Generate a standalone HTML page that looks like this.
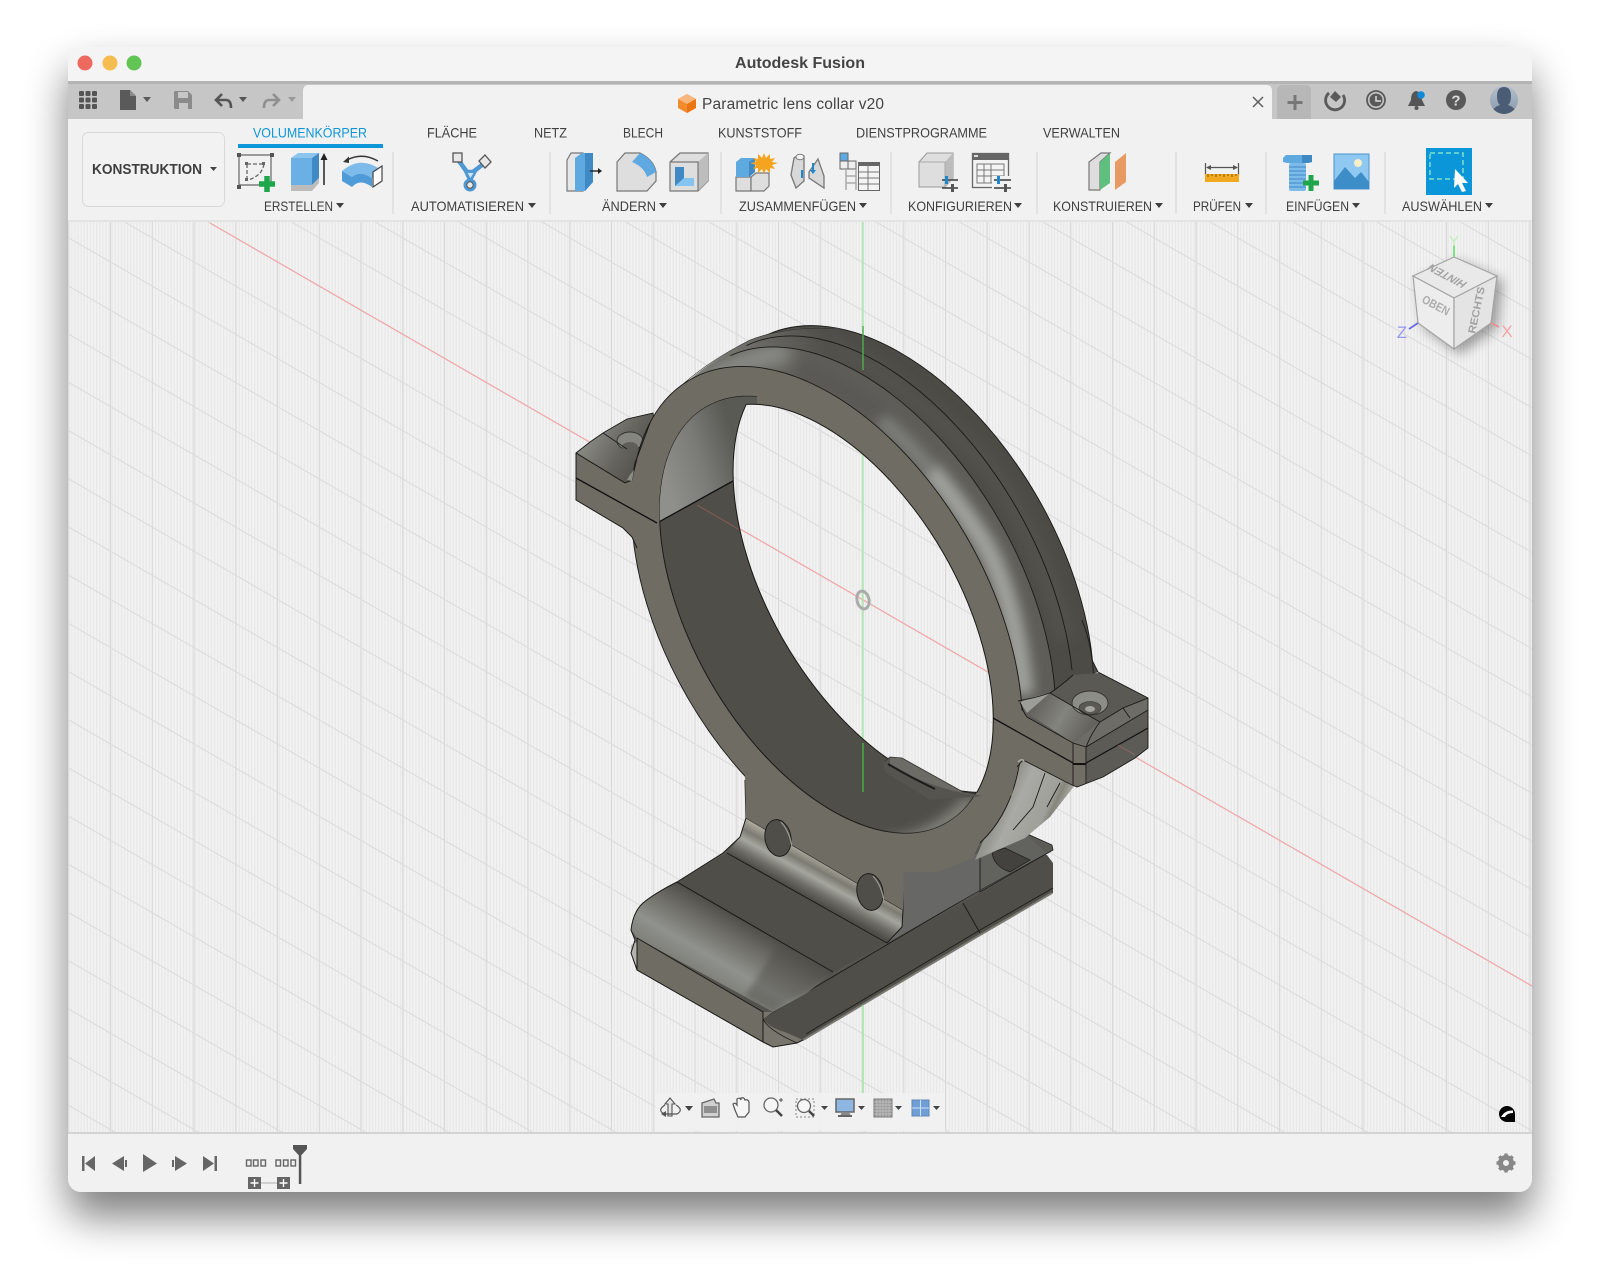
<!DOCTYPE html>
<html lang="de"><head><meta charset="utf-8"><title>Autodesk Fusion</title>
<style>
html,body{margin:0;padding:0;background:#fff;width:1600px;height:1282px;overflow:hidden}
svg{display:block}
text{font-family:"Liberation Sans",sans-serif;fill:#3f3f3f}
</style></head><body>
<svg xmlns="http://www.w3.org/2000/svg" width="1600" height="1282" viewBox="0 0 1600 1282">
<defs>
<filter id="ws" x="-10%" y="-10%" width="120%" height="125%"><feGaussianBlur stdDeviation="21"/></filter>
<filter id="b9" x="-40%" y="-40%" width="180%" height="180%"><feGaussianBlur stdDeviation="9"/></filter>
<filter id="b6" x="-30%" y="-30%" width="160%" height="160%"><feGaussianBlur stdDeviation="6"/></filter>
<filter id="b3" x="-30%" y="-30%" width="160%" height="160%"><feGaussianBlur stdDeviation="3"/></filter>
<clipPath id="win"><rect x="68" y="47" width="1464" height="1145" rx="13"/></clipPath>
<clipPath id="avc"><circle cx="1504" cy="100" r="14"/></clipPath>
<pattern id="pf" width="3.1" height="4" patternUnits="userSpaceOnUse"><rect width="3.1" height="4" fill="#f2f2f2"/><rect width="1.1" height="4" fill="#e7e7e7"/></pattern>
<pattern id="pv" width="41.75" height="40" patternUnits="userSpaceOnUse" patternTransform="translate(110 0)"><rect x="0" width="1.1" height="40" fill="#d8d8d8"/></pattern>
<pattern id="pd" width="83.5" height="48.2" patternUnits="userSpaceOnUse" patternTransform="translate(863 600)"><path d="M-2-1.15L85.5 49.35" stroke="#dadada" stroke-width="1" fill="none"/></pattern>
<linearGradient id="gA" gradientUnits="userSpaceOnUse" x1="727" y1="853" x2="746" y2="818"><stop offset="0" stop-color="#4f4e49"/><stop offset=".22" stop-color="#6d6c66"/><stop offset=".5" stop-color="#a5a69f"/><stop offset=".72" stop-color="#7c7b72"/><stop offset="1" stop-color="#b2b0a2"/></linearGradient>
<linearGradient id="gC" gradientUnits="userSpaceOnUse" x1="677" y1="882" x2="643" y2="941"><stop offset="0" stop-color="#4f4e49"/><stop offset=".3" stop-color="#6d6c66"/><stop offset=".7" stop-color="#90928d"/><stop offset="1" stop-color="#7f807a"/></linearGradient>
<linearGradient id="gT" gradientUnits="userSpaceOnUse" x1="662" y1="475" x2="738" y2="450"><stop offset="0" stop-color="#8f908c"/><stop offset=".5" stop-color="#7b7b77"/><stop offset="1" stop-color="#5a5a55"/></linearGradient>
<linearGradient id="gBL" gradientUnits="userSpaceOnUse" x1="585" y1="440" x2="635" y2="470"><stop offset="0" stop-color="#8a8a85"/><stop offset=".6" stop-color="#66655f"/><stop offset="1" stop-color="#55544f"/></linearGradient>
<linearGradient id="gBR" gradientUnits="userSpaceOnUse" x1="1035" y1="705" x2="1085" y2="735"><stop offset="0" stop-color="#64635d"/><stop offset=".5" stop-color="#84847f"/><stop offset="1" stop-color="#64635d"/></linearGradient>
<linearGradient id="gLB" gradientUnits="userSpaceOnUse" x1="1010" y1="790" x2="1065" y2="815"><stop offset="0" stop-color="#95958f"/><stop offset=".2" stop-color="#a9aaa5"/><stop offset=".68" stop-color="#a0a09a"/><stop offset=".78" stop-color="#85857d"/><stop offset="1" stop-color="#b9b9b4"/></linearGradient>
<linearGradient id="gH" gradientUnits="userSpaceOnUse" x1="670" y1="380" x2="830" y2="340"><stop offset="0" stop-color="#868782"/><stop offset=".55" stop-color="#6b6a65"/><stop offset="1" stop-color="#4f4e49"/></linearGradient>
<linearGradient id="av" x1="0" y1="0" x2="0" y2="1"><stop offset="0" stop-color="#b4c0ce"/><stop offset="1" stop-color="#8a98aa"/></linearGradient>
<clipPath id="cOut"><ellipse cx="897" cy="578" rx="276" ry="162" transform="rotate(60 897 578)"/></clipPath>
<clipPath id="c3"><ellipse cx="860" cy="599" rx="276" ry="160" transform="rotate(60 860 599)"/></clipPath>
<clipPath id="cIn"><ellipse cx="826.5" cy="614.7" rx="240" ry="134" transform="rotate(60 826.5 614.7)"/></clipPath>
<clipPath id="cH"><ellipse cx="829" cy="619" rx="236" ry="132" transform="rotate(60 829 619)"/></clipPath>
<clipPath id="cF"><ellipse cx="827" cy="617" rx="272" ry="159" transform="rotate(60 827 617)"/></clipPath>
<clipPath id="cB"><ellipse cx="900" cy="574" rx="240" ry="134" transform="rotate(60 900 574)"/></clipPath>
<clipPath id="l3"><path d="M727 352L760 300H1200V760L1049 688Z"/></clipPath>
<clipPath id="l2"><path d="M743 342L780 300H1200V740L1072 670Z"/></clipPath>
<mask id="hm" maskUnits="userSpaceOnUse" x="0" y="0" width="1600" height="1282"><rect width="1600" height="1282" fill="#fff"/><g clip-path="url(#cB)"><ellipse cx="829" cy="619" rx="236" ry="132" transform="rotate(60 829 619)" fill="#000"/></g></mask>
</defs>

<rect width="1600" height="1282" fill="#fff"/>
<rect x="68" y="70" width="1464" height="1147" rx="16" fill="#000" opacity=".5" filter="url(#ws)"/>

<g clip-path="url(#win)">
<rect x="68" y="47" width="1464" height="1145" fill="#f1f1f1"/>
<rect x="68" y="47" width="1464" height="34" fill="#f4f4f4"/>
<rect x="68" y="81" width="1464" height="3" fill="#b4b4b4"/>
<rect x="68" y="84" width="1464" height="35" fill="#c6c6c6"/>
<path d="M303 119V90a5 5 0 0 1 5-5H1267a5 5 0 0 1 5 5V119Z" fill="#f2f2f2"/>
<path d="M1277 119V90a5 5 0 0 1 5-5H1306a5 5 0 0 1 5 5V119Z" fill="#b7b7b7"/>
<rect x="68" y="119" width="1464" height="101" fill="#f1f1f1"/>
<rect x="68" y="220" width="1464" height="2" fill="#e3e3e3"/>
<rect x="68" y="222" width="1464" height="910" fill="url(#pf)"/>
<rect x="68" y="222" width="1464" height="910" fill="url(#pv)"/>
<rect x="68" y="222" width="1464" height="910" fill="url(#pd)"/>
<path d="M210 223L1532 986" stroke="#f2a6a6" stroke-width="1.200"/>
<path d="M863 222V1093" stroke="#a6e8a6" stroke-width="1.400"/>
<ellipse cx="863" cy="600" rx="6" ry="9" fill="none" stroke="#a9aca9" stroke-width="3" transform="rotate(-12 863 600)"/>
<rect x="68" y="1132" width="1464" height="2.500" fill="#d3d3d3"/>
<rect x="68" y="1134" width="1464" height="58" fill="#f1f1f1"/>
</g>

<!-- MODEL: foot -->
<path d="M745 780L746 818L740 837L723 853L677 882Q655 893 643 903Q633 912 631 930L635 940L631 953L637 970L763 1042L773 1047L797 1043L803 1040L980 935L1052 893L1053 873L1052 863L1045 853L1053 850L1052 845L1023 832L900 800Z" fill="#55544f"/>
<path d="M1023 832L1052 845L1053 850L980 892L965 870Z" fill="#5c5b56" stroke="#1c1c1a" stroke-width=".8"/>
<path d="M763 1018L883 947L963 903L1047 855L1053 863L1053 893L980 935L803 1040L797 1043L773 1047L763 1042Z" fill="#4f4e48"/>
<path d="M803 1040L980 935L1052 893" stroke="#7a7972" stroke-width="2" fill="none"/>
<path d="M806 1034L980 930L1053 888" stroke="#1c1c1a" stroke-width=".9" fill="none"/>
<path d="M763 1018L883 947L980 890L1047 853" stroke="#1c1c1a" stroke-width="1" fill="none"/>
<path d="M963 903L980 933" stroke="#1c1c1a" stroke-width="1"/>
<path d="M904 872L980 853V890L887 943L902 927L903 910Z" fill="#676765"/>
<path d="M980 853L1023 832L1047 853L980 890Z" fill="#62625e"/>
<path d="M980 853V890" stroke="#1c1c1a" stroke-width=".9"/>
<path d="M992 852Q993 866 1010 872L1030 860L1005 848Z" fill="#43423e" stroke="#1c1c1a" stroke-width=".7"/>
<path d="M746 818L903 910L902 927L887 943L727 853L740 837Z" fill="url(#gA)"/>
<path d="M727 853L887 943L833 972L677 882Z" fill="#4f4e49"/>
<path d="M677 882L833 972L807 993L773 1012L637 938L631 930Q633 912 643 903Q655 893 677 882Z" fill="url(#gC)"/>
<path d="M780 942L833 972L807 993L773 1012L745 996Z" fill="#4f4e49" opacity=".45" filter="url(#b3)"/>
<path d="M637 938L763 1012V1042L637 970L631 953L635 940Z" fill="#6f6c63"/>
<path d="M763 1012L773 1012L763 1019V1042L773 1047L797 1043L803 1040L785 1032Q770 1028 763 1019" fill="#77756c"/>
<path d="M631 945L637 942V968L631 953Z" fill="#b5b5b0"/>
<path d="M763 1019Q768 1030 797 1043" stroke="#1c1c1a" stroke-width=".9" fill="none"/>
<g fill="none" stroke="#191917" stroke-width="1">
<path d="M745 780L746 818L740 837L723 853L677 882Q655 893 643 903Q633 912 631 930L635 940L631 953L637 970L763 1042L773 1047L797 1043L803 1040"/>
<path d="M727 853L887 943"/><path d="M677 882L833 972"/><path d="M637 938L763 1012V1042"/><path d="M637 938V970"/>
<path d="M746 818L903 910"/>
<path d="M903 872V910L902 927L887 943"/>
</g>

<!-- MODEL: ring -->
<g mask="url(#hm)">
<path d="M576 453L590 442L603 433L627 419L653 413L655 430L640 470L632 480L625 483Z" fill="url(#gBL)" stroke="#191917" stroke-width=".9"/>
<ellipse cx="630" cy="441" rx="13" ry="9" fill="#85857f" stroke="#33322e" stroke-width=".9"/>
<ellipse cx="630" cy="447" rx="8" ry="5" fill="#5f5e59"/>
<path d="M603 433L627 449" stroke="#191917" stroke-width=".8"/>
<path d="M1082 620Q1090 640 1092 660L1098 672L1060 690Z" fill="#4c4b46"/>
<ellipse cx="897" cy="578" rx="276" ry="162" transform="rotate(60 897 578)" fill="#4c4b46" stroke="#191917" stroke-width=".9"/>
<path d="M653 418Q688 372 750 340Q790 324 838 328L870 400L720 440Z" fill="url(#gH)"/>
<path d="M665 402Q695 368 750 340Q790 325 838 329" fill="none" stroke="#33322e" stroke-width=".6"/>
<g clip-path="url(#cOut)">
<path d="M830 345Q910 385 990 470Q1040 540 1065 640" stroke="#52514c" stroke-width="22" fill="none" filter="url(#b6)"/>
</g>
<ellipse cx="860" cy="599" rx="276" ry="160" transform="rotate(60 860 599)" fill="#5e5d58"/>
<g clip-path="url(#c3)">
<path d="M676 405Q720 362 790 352" stroke="#8f908b" stroke-width="22" fill="none" filter="url(#b9)"/>
<path d="M800 370Q860 395 890 425" stroke="#5a5954" stroke-width="20" fill="none" filter="url(#b6)"/>
<path d="M880 420Q905 440 930 470" stroke="#7e7f7a" stroke-width="16" fill="none" filter="url(#b6)"/>
<path d="M930 470Q960 505 985 545Q1015 600 1024 695" stroke="#a0a29e" stroke-width="20" fill="none" filter="url(#b6)"/>
</g>
<g fill="none" stroke="#191917" stroke-width=".9">
<g clip-path="url(#l3)"><ellipse cx="860" cy="599" rx="276" ry="160" transform="rotate(60 860 599)"/></g>
<g clip-path="url(#l2)"><ellipse cx="878" cy="588" rx="276" ry="160" transform="rotate(60 878 588)"/></g>
</g>
<path d="M1017 760L1023 758L1075 785L1050 817L1025 838L975 860L990 825L1012 790Z" fill="url(#gLB)"/>
<path d="M1045 773L1033 807L1013 830M1060 783L1047 807" stroke="#191917" stroke-width=".9" fill="none"/>
<ellipse cx="827" cy="617" rx="274" ry="161" transform="rotate(60 827 617)" fill="#6f6c63" stroke="#191917" stroke-width=".9"/>
<path d="M745 775L746 818L903 910L904 872L937 872L973 858L990 820L960 790L860 800L760 730Z" fill="#6f6c63"/>
<path d="M576 453L625 483L632 480L636 465L650 425L680 400L690 500L660 560L640 560L636 545L632 537L623 528L576 500Z" fill="#6f6c63"/>
<path d="M985 690L1017 698L1020 708L1027 717L1073 743V785L1023 760L1017 767L1012 795L985 810Z" fill="#6f6c63"/>
<ellipse cx="826.5" cy="614.7" rx="240" ry="134" transform="rotate(60 826.5 614.7)" fill="#4f4e49" stroke="#191917" stroke-width="1"/>
<g clip-path="url(#cIn)">
<path d="M880 845Q930 845 972 800" stroke="#86867f" stroke-width="14" fill="none" filter="url(#b6)"/>
<path d="M640 532L657 523L733 481L800 444V340H640Z" fill="url(#gT)"/>
<path d="M657 523L733 481" stroke="#111" stroke-width="1.300"/>
<path d="M697 505L740 530" stroke="#a3635f" stroke-width="1" opacity=".7"/>
</g>
<g clip-path="url(#cF)"><path d="M757 403L978 791L1150 800V300H757Z" fill="#6f6c63"/></g>
</g>
<!-- hole edges -->
<g clip-path="url(#cB)"><ellipse cx="829" cy="619" rx="236" ry="132" transform="rotate(60 829 619)" fill="none" stroke="#191917" stroke-width="1"/></g>
<g clip-path="url(#cH)"><ellipse cx="900" cy="574" rx="240" ry="134" transform="rotate(60 900 574)" fill="none" stroke="#191917" stroke-width="1"/></g>
<!-- bump -->
<path d="M883 764L890 757L902 758L963 792L982 796L930 800L885 772Z" fill="#55544f"/>
<path d="M890 757L902 758L963 792L975 795Q930 788 890 766Z" fill="#6c6b65"/>
<path d="M888 764Q910 777 935 789" stroke="#1c1c1a" stroke-width="2" fill="none"/>
<path d="M885 761L890 757L902 758L963 792L976 794" stroke="#33322e" stroke-width=".8" fill="none"/>

<!-- left block lines -->
<g fill="none" stroke="#191917" stroke-width="1">
<path d="M576 453V500L623 528L632 537L637 548"/>
<path d="M576 453L625 483L632 480L635 463L650 423"/>
</g>
<path d="M576 478L657 523" stroke="#111" stroke-width="1.300"/>
<path d="M627 480Q630 474 634 470L632 481Z" fill="#8c8c86"/>

<!-- right block -->
<path d="M1027 713L1050 693L1073 675L1100 673L1148 698V748L1135 758L1103 777L1077 787L1073 785V743Z" fill="#5c5b56"/>
<path d="M1027 713L1050 693L1100 722L1073 743Z" fill="url(#gBR)"/>
<path d="M1020 702Q1034 696 1050 693L1027 713Z" fill="#9c9d98"/>
<path d="M1050 693L1073 675L1100 673L1148 698L1123 708L1100 722Z" fill="#5a5954"/>
<path d="M1100 722L1123 708L1148 698V710L1086 747L1073 743Z" fill="#6d6c67"/>
<path d="M1073 743L1086 747L1087 783L1077 787L1073 785Z" fill="#716e65"/>
<ellipse cx="1090" cy="703" rx="18" ry="12" fill="#8d8d87" stroke="#33322e" stroke-width=".9"/>
<ellipse cx="1090" cy="708" rx="11" ry="6.500" fill="#5a5954" stroke="#33322e" stroke-width=".6"/>
<ellipse cx="1090" cy="709" rx="5" ry="3" fill="#a5a59f"/>
<g fill="none" stroke="#191917" stroke-width=".9">
<path d="M1082 620Q1090 640 1092 660L1098 672L1148 698V748L1135 758L1103 777L1077 787L1072 785L1023 760L1017 767"/>
<path d="M1020 702Q1023 712 1027 717L1073 743L1086 747L1148 710"/>
<path d="M1018 701Q1035 698 1050 693Q1062 685 1073 675"/>
<path d="M1050 693L1100 722L1123 708L1148 698"/>
<path d="M1100 722Q1092 732 1086 747M1123 708L1130 718"/>
<path d="M1073 743V785M1086 747V783"/>
</g>
<path d="M993 718L1073 763" stroke="#111" stroke-width="1.300"/>
<path d="M1073 764H1086" stroke="#111" stroke-width="2"/>
<path d="M1086 763L1148 728" stroke="#111" stroke-width="1.200"/>
<path d="M1118 745L1135 755" stroke="#9d6a66" stroke-width="1" opacity=".8"/>
<path d="M1024 761Q1022 758 1018 762" stroke="#a9a9a4" stroke-width="1.500" fill="none"/>

<!-- post holes -->
<g stroke="#191917" stroke-width=".9">
<ellipse cx="778" cy="838" rx="13" ry="18.500" fill="#4f4e49" transform="rotate(-10 778 838)"/>
<path d="M781 822Q790 832 792 848" fill="none" stroke="#9b9b93" stroke-width="1.200"/>
<ellipse cx="870" cy="892" rx="13" ry="18.500" fill="#4f4e49" transform="rotate(-10 870 892)"/>
<path d="M873 876Q882 886 884 902" fill="none" stroke="#9b9b93" stroke-width="1.200"/>
</g>
<path d="M863 326V370" stroke="#4cae4c" stroke-width="1.400"/>
<path d="M863 743V792" stroke="#44a944" stroke-width="1.600"/>
<path d="M863 1005V1093" stroke="#a6e8a6" stroke-width="1.400"/>

<!-- TITLEBAR -->
<circle cx="85" cy="63" r="7.500" fill="#ee6a5f"/><circle cx="110" cy="63" r="7.500" fill="#f5bd4f"/><circle cx="134" cy="63" r="7.500" fill="#61c454"/>
<text x="735" y="68" font-size="16" font-weight="700" textLength="130" lengthAdjust="spacingAndGlyphs" style="fill:#444">Autodesk Fusion</text>

<g fill="#555"><rect x="79" y="91" width="5" height="5" rx="1"/><rect x="85.500" y="91" width="5" height="5" rx="1"/><rect x="92" y="91" width="5" height="5" rx="1"/><rect x="79" y="97.500" width="5" height="5" rx="1"/><rect x="85.500" y="97.500" width="5" height="5" rx="1"/><rect x="92" y="97.500" width="5" height="5" rx="1"/><rect x="79" y="104" width="5" height="5" rx="1"/><rect x="85.500" y="104" width="5" height="5" rx="1"/><rect x="92" y="104" width="5" height="5" rx="1"/></g>
<path d="M120 90H130L136 96V110H120Z" fill="#5a5a5a"/><path d="M130 90V96H136" fill="#8a8a8a"/>
<path d="M143 97H151L147 102Z" fill="#5a5a5a"/>
<path d="M175 91H188L192 95V109H175a1 1 0 0 1-1-1V92a1 1 0 0 1 1-1Z" fill="#8b8b8b"/><rect x="178" y="92" width="10" height="6" fill="#c6c6c6"/><rect x="179" y="103" width="9" height="6" fill="#c6c6c6"/>
<path d="M222 94L216 100L222 106M216 100H226Q231 100 231 108" fill="none" stroke="#555" stroke-width="2.600"/>
<path d="M239 97H247L243 102Z" fill="#555"/>
<path d="M273 94L279 100L273 106M279 100H269Q264 100 264 108" fill="none" stroke="#8f8f8f" stroke-width="2.600"/>
<path d="M288 97H296L292 102Z" fill="#999"/>

<path d="M687 94L696 99V108L687 113L678 108V99Z" fill="#f28a2e"/><path d="M687 94L696 99L687 104L678 99Z" fill="#f9b780"/><path d="M687 104L696 99V108L687 113Z" fill="#ec7411"/>
<text x="702" y="109" font-size="15.500" textLength="182" lengthAdjust="spacing" style="fill:#444">Parametric lens collar v20</text>
<path d="M1253 97L1263 107M1263 97L1253 107" stroke="#5e5e5e" stroke-width="1.500"/>
<path d="M1295 95V110M1287.500 102.500H1302.500" stroke="#777" stroke-width="3"/>

<g fill="none" stroke="#5a5a5a"><path d="M1329 93A9.500 9.500 0 1 0 1343 95" stroke-width="2.800"/><path d="M1335 91L1341 97L1336 102L1330 97Z" fill="#5a5a5a" stroke="none"/></g>
<circle cx="1376" cy="100" r="9" fill="#c6c6c6" stroke="#5a5a5a" stroke-width="1.800"/><circle cx="1376" cy="100" r="6.500" fill="#5a5a5a"/><path d="M1376 96V101H1381" fill="none" stroke="#ddd" stroke-width="1.500"/>
<path d="M1416 91Q1422 92 1422 100L1425 106H1408L1411 100Q1411 92 1416 91Z" fill="#555"/><circle cx="1416.500" cy="108" r="2" fill="#555"/><circle cx="1421" cy="95" r="3.800" fill="#0f8ad8"/>
<circle cx="1456" cy="100" r="10" fill="#595959"/><text x="1456" y="105.500" text-anchor="middle" font-size="15" font-weight="700" style="fill:#ddd">?</text>
<circle cx="1504" cy="100" r="14" fill="url(#av)"/><g clip-path="url(#avc)"><path d="M1504 87Q1511 87 1511 96Q1511 103 1508 105Q1517 108 1517 116H1491Q1491 108 1500 105Q1497 103 1497 96Q1497 87 1504 87Z" fill="#4a5d75"/></g>

<!-- ribbon tabs -->
<text x="253" y="137.500" font-size="14" textLength="114" lengthAdjust="spacingAndGlyphs" style="fill:#0d97d9">VOLUMENKÖRPER</text>
<text x="427" y="137.500" font-size="14" textLength="50" lengthAdjust="spacingAndGlyphs">FLÄCHE</text>
<text x="534" y="137.500" font-size="14" textLength="33" lengthAdjust="spacingAndGlyphs">NETZ</text>
<text x="623" y="137.500" font-size="14" textLength="40" lengthAdjust="spacingAndGlyphs">BLECH</text>
<text x="718" y="137.500" font-size="14" textLength="84" lengthAdjust="spacingAndGlyphs">KUNSTSTOFF</text>
<text x="856" y="137.500" font-size="14" textLength="131" lengthAdjust="spacingAndGlyphs">DIENSTPROGRAMME</text>
<text x="1043" y="137.500" font-size="14" textLength="77" lengthAdjust="spacingAndGlyphs">VERWALTEN</text>
<rect x="238" y="144" width="145" height="4" fill="#0d97d9"/>

<rect x="82.500" y="132.500" width="142" height="74" rx="6" fill="#f2f2f2" stroke="#d9d9d9"/>
<text x="92" y="174" font-size="14.500" font-weight="700" textLength="110" lengthAdjust="spacingAndGlyphs">KONSTRUKTION</text>
<path d="M210 167H217L213.500 171Z" fill="#444"/>

<!-- group labels -->
<text x="264" y="211" font-size="14" textLength="69" lengthAdjust="spacingAndGlyphs">ERSTELLEN</text><path d="M336 203H344L340 208Z" fill="#3f3f3f"/>
<text x="411" y="211" font-size="14" textLength="113" lengthAdjust="spacingAndGlyphs">AUTOMATISIEREN</text><path d="M528 203H536L532 208Z" fill="#3f3f3f"/>
<text x="602" y="211" font-size="14" textLength="54" lengthAdjust="spacingAndGlyphs">ÄNDERN</text><path d="M659 203H667L663 208Z" fill="#3f3f3f"/>
<text x="739" y="211" font-size="14" textLength="117" lengthAdjust="spacingAndGlyphs">ZUSAMMENFÜGEN</text><path d="M859 203H867L863 208Z" fill="#3f3f3f"/>
<text x="908" y="211" font-size="14" textLength="104" lengthAdjust="spacingAndGlyphs">KONFIGURIEREN</text><path d="M1014 203H1022L1018 208Z" fill="#3f3f3f"/>
<text x="1053" y="211" font-size="14" textLength="99" lengthAdjust="spacingAndGlyphs">KONSTRUIEREN</text><path d="M1155 203H1163L1159 208Z" fill="#3f3f3f"/>
<text x="1193" y="211" font-size="14" textLength="48" lengthAdjust="spacingAndGlyphs">PRÜFEN</text><path d="M1245 203H1253L1249 208Z" fill="#3f3f3f"/>
<text x="1286" y="211" font-size="14" textLength="63" lengthAdjust="spacingAndGlyphs">EINFÜGEN</text><path d="M1352 203H1360L1356 208Z" fill="#3f3f3f"/>
<text x="1402" y="211" font-size="14" textLength="80" lengthAdjust="spacingAndGlyphs">AUSWÄHLEN</text><path d="M1485 203H1493L1489 208Z" fill="#3f3f3f"/>
<g fill="#d2d2d2"><rect x="392.500" y="152" width="1" height="62"/><rect x="549.500" y="152" width="1" height="62"/><rect x="720.500" y="152" width="1" height="62"/><rect x="890.500" y="152" width="1" height="62"/><rect x="1036.500" y="152" width="1" height="62"/><rect x="1175.500" y="152" width="1" height="62"/><rect x="1265.500" y="152" width="1" height="62"/><rect x="1384.500" y="152" width="1" height="62"/></g>

<!-- ERSTELLEN icons -->
<path d="M239 155H271V185H239Z" fill="none" stroke="#666" stroke-width="1.200"/>
<g fill="#555"><rect x="237" y="153" width="4" height="4"/><rect x="270" y="153" width="4" height="4"/><rect x="237" y="185" width="4" height="4"/></g>
<path d="M247 164H264M247 164V181M264 164Q262 176 248 180" fill="none" stroke="#666" stroke-width="1.300" stroke-dasharray="4 2"/>
<g fill="#666"><rect x="245" y="162" width="3" height="3"/><rect x="262" y="162" width="3" height="3"/><rect x="245" y="178" width="3" height="3"/></g>
<path d="M267 176V192M259 184H275" stroke="#1fa54a" stroke-width="5.500"/>
<path d="M291 158H312V185H291Z" fill="#6ab0e4"/><path d="M291 158L298 153H319L312 158Z" fill="#8cc6ee"/><path d="M312 158L319 153V178L312 185Z" fill="#3f89c5"/><path d="M291 185H312L319 178V183L312 191H291Z" fill="#bcbcbc"/>
<path d="M324 185V157" stroke="#222" stroke-width="1.500"/><path d="M320.500 160L324 153L327.500 160Z" fill="#222"/>
<path d="M342 171Q361 155 381 170L372 178Q360 170 352 177Z" fill="#7dbcea"/>
<path d="M342 171L352 177Q360 170 372 178V187Q360 178 352 187L342 181Z" fill="#4f9bd8"/>
<path d="M373 172L382 166V181L373 187Z" fill="#fff" stroke="#444" stroke-width="1.200"/>
<path d="M347 160Q362 152 378 161" fill="none" stroke="#333" stroke-width="1.400"/><path d="M343 162L349 156.500V163Z" fill="#333"/>

<!-- AUTOMATISIEREN -->
<path d="M459 161L467 172L470 178L473 172L482 165" fill="none" stroke="#4f98d4" stroke-width="4.500"/><path d="M465 171H476L470 182Z" fill="#4f98d4" stroke="#4f98d4" stroke-width="2.500"/><path d="M467.500 173H473.500L470.500 178Z" fill="#cfe3f3"/><path d="M470 180V186" stroke="#4f98d4" stroke-width="3"/>
<rect x="453" y="153" width="9" height="9" fill="#e7e7e7" stroke="#555" stroke-width="1.300"/><path d="M485 155L491 162L485 168L479 161Z" fill="#e7e7e7" stroke="#555" stroke-width="1.300"/>
<circle cx="470" cy="185" r="6.500" fill="#4f98d4"/><circle cx="470" cy="185" r="3.200" fill="#e7e7e7" stroke="#555"/>

<!-- ÄNDERN -->
<path d="M567 191V160L571 153H583V191Z" fill="#e6e6e6" stroke="#777" stroke-width="1.200"/>
<path d="M575 158L582 153H593V182L585 191H575Z" fill="#5ea9e0"/><path d="M585 153H593V182L585 191Z" fill="#3f89c5"/>
<path d="M590 171H599" stroke="#222" stroke-width="1.400"/><path d="M598 168L602 171L598 174Z" fill="#222"/>
<path d="M617 191V162L625 153H640Q654 160 656 172V181L647 191Z" fill="#dedede" stroke="#777" stroke-width="1.200"/>
<path d="M632 162L640 153Q654 160 656 172L647 177Q644 167 632 162Z" fill="#5ea9e0"/>
<path d="M670 162L680 153H708V181L698 191H670Z" fill="#dedede" stroke="#777" stroke-width="1.200"/><path d="M698 162L708 153V181L698 191Z" fill="#bdbdbd"/><path d="M670 162H698V191" fill="none" stroke="#777" stroke-width="1.200"/>
<path d="M675 167H684V178H694V186H675Z" fill="#3f89c5"/><path d="M684 178H694V186H675Z" fill="#85c3f0"/>

<!-- ZUSAMMENFÜGEN -->
<path d="M736 191V177H751V191Z" fill="#dedede" stroke="#777" stroke-width="1.200"/><path d="M751 191V177L756 173H769V186L764 191Z" fill="#dedede" stroke="#777" stroke-width="1.200"/>
<path d="M736 162L741 158H755V172L749 177H736Z" fill="#5ea9e0"/><path d="M749 162L755 158V172L749 177Z" fill="#3f89c5"/>
<path d="M764 153L766 158L770 154L770 159L775 158L772 162L778 163L772 165L775 169L770 168L770 173L766 169L764 174L762 169L758 173L758 168L753 169L756 165L750 163L756 162L753 158L758 159L758 154L762 158Z" fill="#f5a41f"/>
<path d="M791 175L794 158Q797 155 804 156V181L796 188Z" fill="#d8d8d8" stroke="#777" stroke-width="1.300"/><ellipse cx="800" cy="157" rx="4" ry="2.800" fill="#f4f4f4" stroke="#777"/>
<path d="M802 170V178" stroke="#1d86cf" stroke-width="2"/>
<path d="M809 172L818 159L824 176L824 188L809 178Z" fill="#d8d8d8" stroke="#777" stroke-width="1.300"/>
<path d="M813 163V172" stroke="#1d86cf" stroke-width="2"/><path d="M810 170H816L813 174Z" fill="#1d86cf"/>
<rect x="840" y="153" width="8" height="8" fill="#5ea9e0" stroke="#666"/><rect x="840" y="161" width="8" height="8" fill="#eee" stroke="#666"/><rect x="848" y="161" width="8" height="8" fill="#eee" stroke="#666"/>
<path d="M846 169V190M856 169V190M846 176H856M846 183H856" stroke="#aaa" stroke-width="1.500" fill="none"/>
<rect x="858.500" y="162.500" width="21" height="28" fill="#f4f4f4" stroke="#666"/><rect x="858" y="162" width="22" height="4" fill="#666"/><path d="M859 172H879M859 178H879M859 184H879M868 166V190" stroke="#777"/>

<!-- KONFIGURIEREN -->
<path d="M919 162L927 153H953V178L945 187H919Z" fill="#dedede" stroke="#999"/><path d="M945 162L953 153V178L945 187Z" fill="#bcbcbc"/><path d="M919 162H945V187" fill="none" stroke="#aaa"/>
<path d="M942 180H958M942 188H958" stroke="#555" stroke-width="1.800"/><rect x="945" y="176" width="3" height="8" fill="#1d86cf"/><rect x="951" y="184" width="3" height="8" fill="#555"/>
<rect x="972.500" y="153.500" width="36" height="34" fill="#f4f4f4" stroke="#666" stroke-width="1.300"/><rect x="972" y="153" width="37" height="7" fill="#666"/><rect x="974" y="155" width="4" height="2" fill="#ddd"/>
<rect x="977" y="164" width="27" height="19" fill="none" stroke="#777"/><path d="M977 170H1004M977 176H1004M984 164V183M991 164V183" stroke="#777"/>
<rect x="992" y="176" width="19" height="15" fill="#f1f1f1"/>
<path d="M994 180H1011M994 188H1011" stroke="#555" stroke-width="1.800"/><rect x="997" y="176" width="3" height="8" fill="#1d86cf"/><rect x="1004" y="184" width="3" height="8" fill="#555"/>

<!-- KONSTRUIEREN -->
<path d="M1089 190V162L1101 153H1110L1100 162V190Z" fill="#dedede" stroke="#777" stroke-width="1.200"/>
<path d="M1100 190V162L1110 153V183Z" fill="#5fbf7e"/><path d="M1115 190V162L1126 153V182Z" fill="#e89a63"/>

<!-- PRÜFEN -->
<g transform="translate(2 0)">
<path d="M1203.500 163V175M1236.500 163V175M1205 167.500H1235" stroke="#555" stroke-width="1.200"/><path d="M1204 167.500L1209 165V170ZM1236 167.500L1231 165V170Z" fill="#555"/>
<rect x="1203" y="174" width="34" height="8" fill="#f2a81f"/><path d="M1206 174V177M1210 174V176M1214 174V177M1218 174V176M1222 174V177M1226 174V176M1230 174V177M1234 174V176" stroke="#7a5a10"/>
</g>

<!-- EINFÜGEN -->
<g transform="translate(3 0)">
<path d="M1280 158L1283 155H1309V162L1305 163H1284L1280 162Z" fill="#5ea9e0"/><path d="M1299 155H1309V162L1305 163H1299Z" fill="#3f89c5"/>
<rect x="1286" y="163" width="17" height="28" rx="2" fill="#7dbcea"/><path d="M1286 167H1303M1286 171H1303M1286 175H1303M1286 179H1303M1286 183H1303M1286 187H1303" stroke="#4b93cd" stroke-width="1.200"/>
<path d="M1308 175V191M1300 183H1316" stroke="#1fa54a" stroke-width="5"/>
<rect x="1331" y="154" width="35" height="35" fill="#8fc8f0" stroke="#4b93cd"/><circle cx="1355" cy="163" r="4" fill="#f7eec8"/>
<path d="M1331 181L1342 167L1352 178L1358 172L1366 182V189H1331Z" fill="#3d8ec8"/>
</g>

<!-- AUSWÄHLEN -->
<g transform="translate(5 0)">
<rect x="1421" y="148" width="46" height="47" fill="#0a96d8"/>
<rect x="1425" y="153" width="33" height="26" fill="none" stroke="#7fe0c8" stroke-width="1.500" stroke-dasharray="5 3"/>
<path d="M1450 169L1463 183L1457 183L1461 191L1457 192L1453 184L1449 188Z" fill="#fff"/>
</g>

<!-- View cube -->
<g transform="translate(6 0)">
<path d="M1448 257L1491 276L1485 323L1448 349L1412 323L1407 276Z" fill="#000" opacity=".35" filter="url(#b6)" transform="translate(6 5)"/>
<path d="M1448 257L1491 276L1448 298L1407 276Z" fill="#e9e9e9" stroke="#a4a4a4" stroke-width="1.200"/>
<path d="M1407 276L1448 298V349L1412 323Z" fill="#ededed" stroke="#a4a4a4" stroke-width="1.200"/>
<path d="M1491 276L1448 298V349L1485 323Z" fill="#e4e4e4" stroke="#a4a4a4" stroke-width="1.200"/>
<text font-size="11" font-weight="700" transform="translate(1462 283) rotate(208) skewX(-20)" style="fill:#a3a3a3">HINTEN</text>
<text font-size="12" font-weight="700" transform="translate(1415 302) rotate(28) scale(.85 1)" style="fill:#adadad">OBEN</text>
<text font-size="11" font-weight="700" transform="translate(1469 334) rotate(-78) scale(1.050 .95)" style="fill:#a0a0a0">RECHTS</text>
<path d="M1448 257V245" stroke="#7fe07f" stroke-width="2"/><path d="M1412 323L1403 329" stroke="#6a6ae0" stroke-width="1.800"/><path d="M1485 323L1493 327" stroke="#ee8b8b" stroke-width="1.800"/>
<text x="1448" y="246" text-anchor="middle" font-size="15" style="fill:#bff0bf">Y</text>
<text x="1396" y="338" text-anchor="middle" font-size="17" style="fill:#9797f0">Z</text>
<text x="1501" y="337" text-anchor="middle" font-size="17" style="fill:#f3a3a3">X</text>
</g>

<!-- bottom nav bar -->
<rect x="655" y="1093" width="290" height="38" fill="#f1f1f1" opacity=".92"/>
<path d="M670 1098L665 1104H668V1116H672V1104H675Z" fill="#e4e4e4" stroke="#555" stroke-width="1.100"/>
<path d="M665 1105Q657 1110 664 1114H677Q684 1110 676 1105" fill="none" stroke="#555" stroke-width="1.200"/><path d="M661 1114L666 1111V1117Z" fill="#555"/>
<path d="M685 1106H693L689 1111Z" fill="#444"/>
<path d="M702 1103L714 1099L716 1103H719V1117H702Z" fill="#d0d0d0" stroke="#666" stroke-width="1.300"/><rect x="704" y="1106" width="13" height="7" fill="#8f8f8f"/>
<path d="M735 1110L733 1104Q735 1102 737 1105V1099Q740 1097 741 1100V1098Q744 1097 745 1100Q748 1099 749 1102V1112L745 1117H738Z" fill="#f6f6f6" stroke="#555" stroke-width="1.200"/>
<circle cx="771" cy="1105" r="7" fill="#f6f6f6" stroke="#666" stroke-width="1.300"/><path d="M776 1110L782 1116" stroke="#444" stroke-width="2.500"/><path d="M779 1100H783M781 1098V1102" stroke="#555"/>
<rect x="796" y="1099" width="18" height="18" fill="none" stroke="#888" stroke-dasharray="2 2"/><circle cx="804" cy="1106" r="6.500" fill="#f6f6f6" stroke="#666" stroke-width="1.300"/><path d="M809 1111L814 1116" stroke="#444" stroke-width="2.500"/>
<path d="M821 1106H828L824.500 1110Z" fill="#444"/>
<rect x="836" y="1099" width="18" height="13" fill="#8eb6e2" stroke="#666" stroke-width="1.500"/><path d="M842 1112L840 1116H851L849 1112Z" fill="#888"/><rect x="838" y="1115" width="14" height="2" fill="#666"/>
<path d="M858 1106H865L861.500 1110Z" fill="#444"/>
<rect x="874" y="1099" width="18" height="18" fill="#9a9a9a" stroke="#777"/><path d="M877 1099V1117M880 1099V1117M883 1099V1117M886 1099V1117M889 1099V1117M874 1102H892M874 1105H892M874 1108H892M874 1111H892M874 1114H892" stroke="#c4c4c4" stroke-width=".7"/>
<path d="M895 1106H902L898.500 1110Z" fill="#444"/>
<rect x="912" y="1100" width="17" height="16" fill="#6f9fd6" stroke="#6285b3"/><path d="M920.500 1100V1116M912 1108H929" stroke="#cfdff1"/>
<path d="M933 1106H940L936.500 1110Z" fill="#444"/>

<path d="M1507 1106a8 8 0 1 0 0 16h8v-8a8 8 0 0 0-8-8Z" fill="#050505"/><path d="M1501 1117Q1505 1110 1513 1110.500V1113Q1507 1113 1505 1117Z" fill="#fff"/>

<!-- timeline -->
<g fill="#666">
<rect x="82" y="1156" width="2.500" height="15"/><path d="M95 1156V1171L85 1163.500Z"/>
<path d="M112 1163.500L124 1156V1171Z"/><rect x="125" y="1160" width="2" height="7"/>
<path d="M143 1154L157 1163.500L143 1172Z"/>
<rect x="172" y="1160" width="2" height="7"/><path d="M187 1163.500L175 1156V1171Z"/>
<path d="M203 1156V1171L214 1163.500Z"/><rect x="214.500" y="1156" width="2.500" height="15"/>
</g>
<g fill="#f1f1f1" stroke="#666" stroke-width="1.400"><rect x="246.500" y="1160" width="4.500" height="6"/><rect x="253.500" y="1160" width="4.500" height="6"/><rect x="261" y="1160" width="4.500" height="6"/><rect x="276" y="1160" width="4.500" height="6"/><rect x="283.500" y="1160" width="4.500" height="6"/><rect x="291" y="1160" width="4.500" height="6"/></g>
<rect x="261" y="1182" width="16" height="2" fill="#cfcfcf"/>
<rect x="248" y="1177" width="13" height="12" fill="#666"/><rect x="277" y="1177" width="13" height="12" fill="#666"/>
<path d="M254.500 1179V1187M250.500 1183H258.500M283.500 1179V1187M279.500 1183H287.500" stroke="#fff" stroke-width="1.400"/>
<path d="M293 1145H307V1149L301.500 1155H298.500L293 1149Z" fill="#555"/><rect x="298.800" y="1155" width="2.500" height="29" fill="#555"/>

<g transform="translate(1506 1163)"><circle r="5.500" fill="none" stroke="#888" stroke-width="5"/><g stroke="#888" stroke-width="3.500"><path d="M0-9.500V-7M0 7V9.500M-9.500 0H-7M7 0H9.500M-6.700-6.700L-5-5M5 5L6.700 6.700M-6.700 6.700L-5 5M5-5L6.700-6.700"/></g></g>
</svg>
</body></html>
